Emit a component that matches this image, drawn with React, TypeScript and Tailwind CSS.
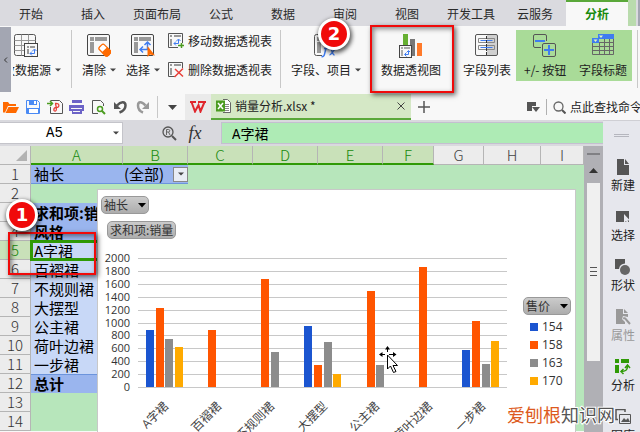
import type { ReactNode } from "react"

interface IconProps {
  width: number
  height: number
  className?: string
  children: ReactNode
}

function Icon({ width, height, className = "", children }: IconProps) {
  return (
    <svg
      width={width}
      height={height}
      viewBox={`0 0 ${width} ${height}`}
      fill="none"
      aria-hidden="true"
      className={`shrink-0 ${className}`}
    >
      {children}
    </svg>
  )
}

function Caret({ className = "" }: { className?: string }) {
  return (
    <Icon width={6} height={4} className={className}>
      <path d="M0 0.5h6L3 3.5z" fill="#444" />
    </Icon>
  )
}

const TABS = [
  "开始",
  "插入",
  "页面布局",
  "公式",
  "数据",
  "审阅",
  "视图",
  "开发工具",
  "云服务",
  "分析",
]

const ACTIVE_TAB = "分析"

function MenuTabs() {
  return (
    <nav className="flex h-[26px] shrink-0 bg-[#dadadf]">
      {TABS.map((tab) => (
        <button
          key={tab}
          type="button"
          className={`min-w-[62px] shrink-0 whitespace-nowrap px-[9px] ${
            tab === ACTIVE_TAB
              ? "border-t-2 border-[#5aa83a] bg-[#f8f8f8] font-bold text-[#178a0c]"
              : "pt-0.5 text-[#2b2b2b]"
          }`}
        >
          {tab}
        </button>
      ))}
      <div className="w-2 shrink-0 bg-[#b9dbad]" />
      <div className="ml-0.5 flex-1 bg-[#a3a6b2]" />
    </nav>
  )
}

/* Ribbon icons */

function SourceIcon() {
  return (
    <Icon width={24} height={24}>
      <path d="M.5 2.5a2 2 0 0 1 2-2h17a2 2 0 0 1 2 2V10M.5 2.5v17a2 2 0 0 0 2 2H10" stroke="#555" />
      <path d="M.5 6.5h21M.5 11.5h10M.5 16.5h10M7.500 .5v21M14.500 .5v9" stroke="#999" />
      <rect x="10.500" y="9.500" width="13" height="13" fill="#f8f8f8" stroke="#444" />
      <path d="M13 12h2v2h-2zM16 12h5v2h-5zM13 15h2v5h-2z" fill="#999" />
      <path d="M16 19.500h4.500v-4M18 17.500l-2 2 2 2M18.500 17l2-2 2 2" stroke="#3f7cf0" />
    </Icon>
  )
}

function PivotFrame() {
  return (
    <>
      <rect x=".5" y=".5" width="22" height="21" rx="1.500" stroke="#444" />
      <path d="M3 3h4v4H3zM8 3h12v4H8zM3 8h4v11H3z" fill="#999" />
    </>
  )
}

function ClearIcon() {
  return (
    <Icon width={24} height={24}>
      <PivotFrame />
      <g transform="rotate(45 17.500 16.500)">
        <rect x="11.500" y="12.500" width="12" height="7" rx="2" fill="#fff" stroke="#ff6a00" strokeWidth="1.300" />
        <path d="M17 12h4.500a2.500 2.500 0 0 1 2.500 2.500v3a2.500 2.500 0 0 1-2.500 2.500H17z" fill="#ff6a00" />
      </g>
    </Icon>
  )
}

function SelectIcon() {
  return (
    <Icon width={24} height={24}>
      <PivotFrame />
      <path d="M9.500 15.500h7v-7M12 12.500l-3 3 3 3M13.500 11l3-3 3 3" stroke="#3f7cf0" strokeWidth="1.500" />
      <path d="M16.500 12v11l2.500-2.500 5 1z" fill="#ff6a00" />
    </Icon>
  )
}

function MovePivotIcon() {
  return (
    <Icon width={17} height={16}>
      <path d="M10 14.500H.5v-14h14V10" stroke="#555" />
      <path d="M2 2h2v2H2zM6 2h7v2H6zM2 6h2v7H2z" fill="#999" />
      <path d="M6 10.500h4.500v-4M8 8.500l-2 2 2 2M8.500 8l2-2 2 2" stroke="#3f7cf0" />
      <path d="M10 12.500h6M13.500 10v5" stroke="#4b9c20" strokeWidth="1.500" />
    </Icon>
  )
}

function DeletePivotIcon() {
  return (
    <Icon width={17} height={16}>
      <path d="M7 14.500H.5v-14h14V6" stroke="#555" />
      <path d="M2 2h2v2H2zM6 2h7v2H6zM2 6h2v7H2z" fill="#999" />
      <path d="M7 7l8 7.500M15 6.500L6.500 15" stroke="#e8403a" strokeWidth="1.500" />
    </Icon>
  )
}

function FieldItemIcon() {
  return (
    <Icon width={24} height={24}>
      <path d="M8 21.500H2.500a2 2 0 0 1-2-2v-17a2 2 0 0 1 2-2h18a2 2 0 0 1 2 2V12" stroke="#555" />
      <path d="M3 3h4v4H3zM8 3h12v4H8zM3 8h4v11H3z" fill="#999" />
      <path d="M7.500 22.500c3.500 1 3-4 4.500-8s2-4.500 4-4M10 14.500h5" stroke="#3f7cf0" strokeWidth="1.500" />
      <path d="M16 15c2-1 2 6 4.500 6M21.500 15c-1.500 0-4 6-6 6" stroke="#3f7cf0" strokeWidth="1.300" />
    </Icon>
  )
}

function PivotChartIcon() {
  return (
    <Icon width={26} height={24}>
      <path d="M5 0h5v11H5z" fill="#66b032" />
      <path d="M12 5h5v17h-5z" fill="#777" />
      <path d="M19 9h5v13h-5z" fill="#ff7a2a" />
      <rect x="1.500" y="11.500" width="12" height="12" fill="#f8f8f8" stroke="#444" />
      <path d="M3 13h2v2H3zM6 13h6v2H6zM3 16h2v6H3z" fill="#aaa" />
      <path d="M7 20.500h3.500v-3.500M8.500 18.500l-2 2 2 2M9 18l1.500-1.500L12 18" stroke="#3f7cf0" />
    </Icon>
  )
}

function FieldListIcon() {
  return (
    <Icon width={24} height={24}>
      <path d="M12 1h9.500a1 1 0 0 1 1 1v18.500a1 1 0 0 1-1 1H12z" fill="#d0d0d0" />
      <rect x=".5" y=".5" width="22" height="21" rx="1.500" stroke="#555" />
      <path d="M3.500 4.500h16v4h-16zM3.500 11.500h16v4h-16z" stroke="#888" />
      <path d="M5.500 6.500h12M5.500 13.500h12" stroke="#3f7cf0" />
      <path d="M11.500 2v20" stroke="#333" strokeDasharray="3 1" />
    </Icon>
  )
}

function PlusMinusIcon() {
  return (
    <Icon width={24} height={24}>
      <path d="M8 13.500H2a1.500 1.500 0 0 1-1.500-1.500V2A1.500 1.500 0 0 1 2 .5h10A1.500 1.500 0 0 1 13.500 2v5" stroke="#555" />
      <rect x="9.500" y="9.500" width="13" height="13" rx="1.500" stroke="#555" />
      <path d="M2 7h10M11 16h10M16 11v10" stroke="#3f7cf0" strokeWidth="2" />
    </Icon>
  )
}

function FieldHeaderIcon() {
  return (
    <Icon width={24} height={24}>
      <path d="M1.500 5v15.500h21V5M8.500 8v12M13.500 5v15M18.500 5v15M1 8.500h21M1 12.500h21M1 16.500h21" stroke="#666" />
      <path d="M7 0h16v5H7zM1 4h7v5H1z" fill="#3f7cf0" />
      <path d="M8 1.500h4l-2 2.500zM2.500 5.500h4l-2 2.500z" fill="#e6f6c0" />
    </Icon>
  )
}

interface RibbonButtonProps {
  icon: ReactNode
  label: string
  menu?: boolean
  className?: string
}

function RibbonButton({ icon, label, menu = false, className = "" }: RibbonButtonProps) {
  return (
    <button type="button" className={`flex shrink-0 flex-col items-center gap-1 ${className}`}>
      {icon}
      <span className="flex items-center gap-1 whitespace-nowrap leading-4">
        {label}
        {menu && <Caret />}
      </span>
    </button>
  )
}

function RibbonDivider({ className = "" }: { className?: string }) {
  return <div className={`-mt-1 h-[58px] w-px shrink-0 bg-[#c8c8c8] ${className}`} />
}

function Ribbon() {
  return (
    <div className="flex h-[68px] shrink-0 items-start bg-[#f8f8f8] pt-2 text-[#222]">
      <button
        type="button"
        aria-label="向左滚动"
        className="-mt-[7px] flex h-[65px] w-[11px] shrink-0 items-center justify-center bg-[#a3a6b2]"
      >
        <Icon width={5} height={6}>
          <path d="M4 .5L1.500 3 4 5.500" stroke="#333" />
        </Icon>
      </button>
      <div className="ml-0.5 flex w-[48px] shrink-0 flex-col items-end gap-1 overflow-hidden">
        <div className="w-full pl-px">
          <SourceIcon />
        </div>
        <button type="button" className="flex items-center gap-1 whitespace-nowrap leading-4">
          改数据源
          <Caret />
        </button>
      </div>
      <RibbonDivider className="ml-[10px]" />
      <RibbonButton icon={<ClearIcon />} label="清除" menu className="ml-[10px]" />
      <RibbonButton icon={<SelectIcon />} label="选择" menu className="ml-[10px]" />
      <div className="-mt-px ml-2 flex shrink-0 flex-col gap-[13px]">
        <button type="button" className="flex items-center gap-[3px] leading-4">
          <MovePivotIcon />
          移动数据透视表
        </button>
        <button type="button" className="flex items-center gap-[3px] leading-4">
          <DeletePivotIcon />
          删除数据透视表
        </button>
      </div>
      <RibbonDivider className="ml-2" />
      <RibbonButton icon={<FieldItemIcon />} label="字段、项目" menu className="ml-[10px]" />
      <RibbonButton icon={<PivotChartIcon />} label="数据透视图" className="ml-5" />
      <RibbonButton icon={<FieldListIcon />} label="字段列表" className="ml-[22px]" />
      <div className="-mt-1 ml-[5px] grid h-[51px] w-[116px] shrink-0 grid-cols-2 bg-[#a9db98] pt-1">
        <RibbonButton icon={<PlusMinusIcon />} label="+/- 按钮" />
        <RibbonButton icon={<FieldHeaderIcon />} label="字段标题" />
      </div>
      <RibbonDivider className="ml-[5px]" />
    </div>
  )
}

function QuickButton({ label, children }: { label: string; children: ReactNode }) {
  return (
    <button type="button" aria-label={label} title={label} className="shrink-0">
      {children}
    </button>
  )
}

function QuickAccess() {
  return (
    <div className="flex h-[26px] shrink-0 items-center overflow-hidden bg-[#f8f8f8] text-[#222]">
      <div className="flex shrink-0 items-center gap-1.5 pl-[3px]">
        <QuickButton label="打开">
          <Icon width={16} height={16}>
            <path d="M0 3h5l1.500 2H13v2H5l-3 6.500H0z" fill="#ff6a00" />
            <path d="M5.500 8H16l-3 6H2.500z" fill="#ff6a00" />
          </Icon>
        </QuickButton>
        <QuickButton label="保存">
          <Icon width={16} height={16}>
            <path d="M1.500 1.500h11l2 2v11h-13z" stroke="#4a8af4" />
            <path d="M4 1h8v5H4zM1 9h14v5H1z" fill="#4a8af4" />
            <path d="M9 2h2v3H9zM4 10h9v4H4z" fill="#fff" />
          </Icon>
        </QuickButton>
        <QuickButton label="输出为PDF">
          <Icon width={16} height={16}>
            <path d="M3.500 1.500h9l3 3v10h-12V8" stroke="#555" />
            <path d="M0 4.500h5M3 2l2.500 2.500L3 7" stroke="#4b9c20" strokeWidth="1.500" />
            <path d="M8 4.500c5-1 5 4.500 1 4-3 0-2.500 4.500-.5 3.500C10.500 11 9 7 8.500 5" stroke="#e8403a" strokeWidth="1.300" />
          </Icon>
        </QuickButton>
        <QuickButton label="打印">
          <Icon width={16} height={16}>
            <path d="M3 1h10v3H3zM0 6h15v6H0zM3 9h10v6H3z" fill="#6c63c7" />
            <path d="M2 9h11v1H2zM4 12h7v1H4z" fill="#f8f8f8" />
          </Icon>
        </QuickButton>
        <QuickButton label="打印预览">
          <Icon width={16} height={16}>
            <path d="M7 14.500H1.500v-13h8l3 3V7" stroke="#555" />
            <circle cx="9" cy="10" r="2.500" stroke="#4b9c20" strokeWidth="1.500" />
            <path d="M11 12l3 3" stroke="#4b9c20" strokeWidth="2" />
          </Icon>
        </QuickButton>
        <QuickButton label="撤销">
          <Icon width={16} height={16}>
            <path d="M4 6.500c4-4.500 8.500-4 8.500 0 0 3-2 5.500-6 7" stroke="#555" strokeWidth="2.500" />
            <path d="M1 3v7h7z" fill="#555" />
          </Icon>
        </QuickButton>
        <QuickButton label="恢复">
          <Icon width={16} height={16}>
            <path d="M10.500 6.500c-4-4.500-7.500-4-7.500 0 0 3 1 5.500 5 7" stroke="#999" strokeWidth="2.500" />
            <path d="M14 3v7H7z" fill="#999" />
          </Icon>
        </QuickButton>
      </div>
      <div className="ml-1.5 h-[22px] w-px shrink-0 bg-[#c8c8c8]" />
      <button type="button" aria-label="自定义" className="ml-[10px] shrink-0">
        <Icon width={9} height={5}>
          <path d="M0 0h9L4.500 5z" fill="#444" />
        </Icon>
      </button>
      <div className="ml-2 flex h-full w-[26px] shrink-0 items-center justify-center bg-[#eaeaea]">
        <Icon width={16} height={12}>
          <path d="M0 1h6M1.500 1l3.500 9.500L8.500 4l2 6.500L14.500 1M8 1h8" stroke="#e0262c" strokeWidth="2" />
        </Icon>
      </div>
      <div className="flex h-full w-[200px] shrink-0 items-center border-b-2 border-[#5aa83a] bg-[#d5e8c6] pl-[5px] pr-[6px]">
        <Icon width={15} height={14}>
          <path d="M7 .5h4.500l3 3v10H7" fill="#fff" stroke="#666" />
          <path d="M9 5.500h4M9 7.500h4M9 9.500h4M9 11.500h4" stroke="#888" />
          <path d="M0 1.500h9v11H0z" fill="#4b9c20" />
          <path d="M2 4l5 6M7 4l-5 6" stroke="#fff" strokeWidth="1.500" />
        </Icon>
        <span className="ml-1 flex-1 whitespace-nowrap">销量分析.xlsx *</span>
        <button type="button" aria-label="关闭">
          <Icon width={8} height={8}>
            <path d="M.5 .5l7 7M7.500 .5l-7 7" stroke="#444" />
          </Icon>
        </button>
      </div>
      <button type="button" aria-label="新建标签" className="ml-[7px] shrink-0">
        <Icon width={12} height={12}>
          <path d="M6 0v12M0 6h12" stroke="#555" strokeWidth="1.500" />
        </Icon>
      </button>
      <div className="flex-1" />
      <Icon width={13} height={11}>
        <path d="M0 0h9v4H5v5H0z" fill="#555" />
        <path d="M5 5h8L9 10z" fill="#555" />
      </Icon>
      <div className="ml-[6px] h-4 w-px shrink-0 bg-[#b0b0b0]" />
      <button type="button" className="ml-[6px] flex w-[87px] shrink-0 items-center gap-1 overflow-hidden whitespace-nowrap">
        <Icon width={13} height={13}>
          <circle cx="5.500" cy="5.500" r="4.500" stroke="#666" strokeWidth="1.300" />
          <path d="M9 9l3.500 3.500" stroke="#555" strokeWidth="2" />
        </Icon>
        点此查找命令
      </button>
    </div>
  )
}

function FormulaBar() {
  return (
    <div className="flex h-[26px] shrink-0 items-center bg-[#d9d9de] font-['Liberation_Mono','Noto_Sans_CJK_SC',monospace] text-[14px] text-black">
      <div className="flex h-[22px] w-[123px] shrink-0 items-center border border-l-0 border-[#c4c4ca] bg-white pr-[3px]">
        <input
          aria-label="名称框"
          defaultValue="A5"
          className="h-full min-w-0 flex-1 pr-1 text-center outline-none"
        />
        <Caret />
      </div>
      <Icon width={15} height={15} className="ml-[39px]">
        <circle cx="6" cy="6" r="5" stroke="#555" strokeWidth="1.300" />
        <path d="M4.500 9V3.500h2a1.200 1.200 0 0 1 0 2.500h-2M6.500 6l1.500 3" stroke="#666" />
        <path d="M10 10l4 4" stroke="#555" strokeWidth="2" />
      </Icon>
      <button
        type="button"
        className="ml-[10px] w-4 shrink-0 font-['Liberation_Serif',serif] text-lg leading-5 italic text-[#333]"
      >
        fx
      </button>
      <input
        aria-label="编辑栏"
        defaultValue="A字裙"
        className="ml-[18px] h-[22px] min-w-0 flex-1 border border-r-0 border-[#c4bfd0] bg-[#aeebb5] pl-[10px] outline-none"
      />
    </div>
  )
}

const COLUMNS = [
  { name: "A", width: "w-[92px]", selected: true },
  { name: "B", width: "w-[65px]", selected: true },
  { name: "C", width: "w-[65px]", selected: true },
  { name: "D", width: "w-[65px]", selected: true },
  { name: "E", width: "w-[65px]", selected: true },
  { name: "F", width: "w-[51px]", selected: true },
  { name: "G", width: "w-[50px]", selected: false },
  { name: "H", width: "w-[57px]", selected: false },
  { name: "I", width: "", selected: false },
]

const HEADER_CELL = "bg-[#9ab5ee] font-bold"
const ITEM_CELL = "bg-[#c8d8f7]"

const ROWS = [
  { text: "袖长", style: "bg-[#9ab5ee] border-b border-[#6c94dc]" },
  { text: "", style: "" },
  { text: "求和项:销量", style: HEADER_CELL },
  { text: "风格", style: HEADER_CELL },
  { text: "A字裙", style: ITEM_CELL },
  { text: "百褶裙", style: ITEM_CELL },
  { text: "不规则裙", style: ITEM_CELL },
  { text: "大摆型", style: ITEM_CELL },
  { text: "公主裙", style: ITEM_CELL },
  { text: "荷叶边裙", style: ITEM_CELL },
  { text: "一步裙", style: ITEM_CELL },
  { text: "总计", style: "bg-[#9ab5ee] border-t border-[#6c94dc] font-bold" },
  { text: "", style: "" },
  { text: "", style: "" },
]

const SELECTED_ROW = 5

function Sheet() {
  return (
    <table className="w-full table-fixed border-separate border-spacing-0 bg-[#b7e6bb] text-[15px] text-black">
      <thead>
        <tr className="h-[19px] text-[15px] leading-4 text-[#444]">
          <th className="w-[31px] border-r border-b border-[#b5b5b5] bg-[#ececec] p-0">
            <Icon width={11} height={11} className="mr-[3px] ml-auto">
              <path d="M11 0v11H0z" fill="#b2b2b2" />
            </Icon>
          </th>
          {COLUMNS.map((col) => (
            <th
              key={col.name}
              className={`h-[19px] border-r border-r-[#b5b5b5] p-0 font-light ${col.width} ${
                col.selected
                  ? "border-b-2 border-b-[#2f9a06] bg-[#c9e1b9] text-[#178a0c]"
                  : "border-b border-b-[#b5b5b5] bg-[#ececec]"
              }`}
            >
              {col.name}
            </th>
          ))}
        </tr>
      </thead>
      <tbody>
        {ROWS.map((row, i) => {
          const num = i + 1
          const selected = num === SELECTED_ROW
          return (
            <tr key={num} className="leading-[18px]">
              <th
                className={`h-[19px] border-r border-b border-[#b5b5b5] p-0 text-[15px] leading-4 font-light ${
                  selected ? "bg-[#c9e1b9] text-[#178a0c]" : "bg-[#ececec] text-[#333]"
                }`}
              >
                {num}
              </th>
              <td
                className={`overflow-hidden p-0 whitespace-nowrap ${row.style} ${
                  selected ? "outline-[3px] -outline-offset-2 outline-[#2f9a06]" : ""
                }`}
              >
                <div className="pl-[3px]">{row.text}</div>
              </td>
              {num === 1 ? (
                <>
                  <td className="border-b border-[#6c94dc] bg-[#9ab5ee] p-0">
                    <div className="flex items-center justify-between pl-px">
                      (全部)
                      <button
                        type="button"
                        aria-label="筛选袖长"
                        className="flex h-[15px] w-[15px] items-center justify-center border border-[#888] bg-[#e9edf5]"
                      >
                        <Caret />
                      </button>
                    </div>
                  </td>
                  <td colSpan={7} />
                </>
              ) : (
                <td colSpan={8} />
              )}
            </tr>
          )
        })}
      </tbody>
    </table>
  )
}

const SERIES = [
  { name: "154", color: "#1b55d0" },
  { name: "158", color: "#ff5500" },
  { name: "163", color: "#8c8c8c" },
  { name: "170", color: "#ffaa00" },
]

const SALES = [
  { label: "A字裙", values: [890, 1225, 750, 620] },
  { label: "百褶裙", values: [0, 890, 0, 0] },
  { label: "不规则裙", values: [0, 1680, 545, 0] },
  { label: "大摆型", values: [950, 345, 700, 205] },
  { label: "公主裙", values: [0, 1490, 345, 0] },
  { label: "荷叶边裙", values: [0, 1860, 0, 0] },
  { label: "一步裙", values: [575, 1030, 360, 715] },
]

const PLOT = { left: 40, top: 19, width: 369, height: 129 }
const MAX_VALUE = 2000
const TICKS = Array.from({ length: 11 }, (_, i) => MAX_VALUE - i * 200)

function BarChart() {
  const step = PLOT.width / SALES.length
  const bottom = PLOT.top + PLOT.height
  const yOf = (value: number) => Math.round(bottom - (value / MAX_VALUE) * PLOT.height)

  return (
    <svg
      width={425}
      height={200}
      viewBox="0 0 425 200"
      role="img"
      aria-label="销量柱形图"
      className="shrink-0 font-['Open_Sans','Noto_Sans_CJK_SC',sans-serif] text-[11px]"
    >
      {TICKS.map((tick) => (
        <g key={tick}>
          <rect x={PLOT.left} y={yOf(tick)} width={PLOT.width} height={1} fill="#c8c8c8" />
          <text x={32} y={yOf(tick) + 4} textAnchor="end" fill="#333">
            {tick}
          </text>
        </g>
      ))}
      {SALES.map((item, i) => {
        const start = PLOT.left + i * step
        const labelX = Math.round(start + step / 2) + 5
        return (
          <g key={item.label}>
            {item.values.map((value, j) =>
              value > 0 ? (
                <rect
                  key={SERIES[j].name}
                  x={Math.round(start + 8 + j * 9.7)}
                  y={yOf(value)}
                  width={8}
                  height={bottom - yOf(value)}
                  fill={SERIES[j].color}
                />
              ) : null,
            )}
            <text
              x={labelX}
              y={bottom + 20}
              textAnchor="end"
              transform={`rotate(-45 ${labelX} ${bottom + 20})`}
              fill="#444"
              className="text-xs"
            >
              {item.label}
            </text>
          </g>
        )
      })}
    </svg>
  )
}

interface FieldButtonProps {
  label: string
  menu?: boolean
  className?: string
}

function FieldButton({ label, menu = false, className = "" }: FieldButtonProps) {
  return (
    <button
      type="button"
      className={`flex h-[18px] items-center gap-2.5 rounded-[5px] border border-[#999] bg-linear-to-b from-[#cbcbcb] to-[#adadad] px-0.5 leading-4 whitespace-nowrap text-[#333] ${className}`}
    >
      {label}
      {menu && (
        <Icon width={8} height={5}>
          <path d="M0 0h8L4 4.500z" fill="#000" />
        </Icon>
      )}
    </button>
  )
}

function ChartPanel() {
  return (
    <div className="absolute top-[43px] right-2 bottom-0 left-[97px] flex flex-col overflow-hidden border border-b-0 border-[#c8c8c8] bg-white pt-[6px]">
      <div className="flex shrink-0 flex-col items-start gap-[7px] pl-[3px]">
        <FieldButton label="袖长" menu className="text-xs" />
        <FieldButton label="求和项:销量" className="ml-[6px] text-xs" />
      </div>
      <div className="flex items-start">
        <BarChart />
        <div className="flex shrink-0 flex-col pt-[58px]">
          <FieldButton label="售价" menu className="text-xs" />
          <ul className="pt-[3px] pl-[7px] font-['Open_Sans',sans-serif] text-xs text-[#333]">
            {SERIES.map((series) => (
              <li key={series.name} className="flex h-[18px] items-center gap-1">
                <span className="h-2 w-2" style={{ backgroundColor: series.color }} />
                {series.name}
              </li>
            ))}
          </ul>
        </div>
      </div>
    </div>
  )
}

function ScrollBar() {
  return (
    <div className="flex w-[19px] shrink-0 flex-col items-center bg-[#b0b0b5]">
      <div className="mt-[7px] h-0.5 w-[13px] shrink-0 bg-[#808084]" />
      <button type="button" aria-label="向上滚动" className="mt-[13px] shrink-0">
        <Icon width={9} height={5}>
          <path d="M0 5l4.500-5L9 5z" fill="#333" />
        </Icon>
      </button>
      <div className="mt-[10px] flex h-[178px] w-[13px] shrink-0 items-center justify-center bg-[#f0f0f0]">
        <Icon width={7} height={10}>
          <path d="M0 .5h7M0 4.500h7M0 8.500h7" stroke="#555" />
        </Icon>
      </div>
    </div>
  )
}

const SIDE_TOOLS = [
  {
    label: "新建",
    icon: (
      <>
        <path d="M2 0h7v6h5v10H2z" fill="#555" />
        <path d="M10 0l4 5h-4z" fill="#555" />
      </>
    ),
  },
  {
    label: "选择",
    icon: (
      <>
        <path d="M1 2h13v11H1z" fill="#555" />
        <path d="M9 5v9l2-2 1.500 3 1.500-1-1.500-2.500H15z" fill="#e6e7ed" />
      </>
    ),
  },
  {
    label: "形状",
    icon: (
      <>
        <path d="M0 0h10v4.500A6 6 0 0 0 4 10H0z" fill="#555" />
        <circle cx="10" cy="11" r="5" fill="#666" />
      </>
    ),
  },
  {
    label: "属性",
    muted: true,
    icon: (
      <>
        <path d="M1 0h7v5h5v3L8 7l-1 3 3 3v2H1z" fill="#999" />
        <path d="M9 0l4 4H9z" fill="#999" />
        <path d="M8 9.500a2 2 0 0 1 3 1l4 4.500" stroke="#999" strokeWidth="2" />
      </>
    ),
  },
  {
    label: "分析",
    icon: (
      <>
        <path d="M0 0h4v4H0zM6 0h8v4H6zM0 6h4v8H0z" fill="#2f9a06" />
        <path d="M6 12.500c5 0 6.500-1.500 6.500-5.500M8.500 10L6 12.500 8.500 15M10 9l2.500-3L15 9" stroke="#2f9a06" strokeWidth="1.500" />
      </>
    ),
  },
  {
    label: "图库",
    icon: (
      <>
        <path d="M3 10.500H1v-10h9V3" stroke="#555" strokeWidth="1.500" />
        <path d="M4.500 5.500h11v9h-11z" stroke="#555" />
        <path d="M6 13l3-4 2 2 2-2 2 4z" fill="#555" />
      </>
    ),
  },
]

function SideBar() {
  return (
    <aside className="flex w-[37px] shrink-0 flex-col overflow-hidden border-t border-[#cfcfd4] bg-[#e6e7ed] pl-2">
      <div className="mt-[13px] ml-[3px] h-[3px] w-[15px] shrink-0 border-y border-[#b5b6be]" />
      {SIDE_TOOLS.map((tool, i) => (
        <button
          key={tool.label}
          type="button"
          className={`flex h-[50px] w-6 shrink-0 flex-col items-center gap-0.5 whitespace-nowrap ${
            i === 0 ? "mt-[22px]" : ""
          } ${tool.muted ? "text-[#999]" : "text-[#222]"}`}
        >
          <Icon width={16} height={16}>
            {tool.icon}
          </Icon>
          <span className="leading-4">{tool.label}</span>
        </button>
      ))}
    </aside>
  )
}

function StepBadge({ step, className }: { step: number; className: string }) {
  return (
    <div
      className={`absolute flex h-8 w-8 items-center justify-center rounded-full border-[3px] border-white bg-[#f00a0a] font-['DejaVu_Sans',sans-serif] text-lg font-bold text-white shadow-[1px_2px_4px_1px_rgba(0,0,0,0.65)] ${className}`}
    >
      {step}
    </div>
  )
}

function Highlight({ className }: { className: string }) {
  return (
    <div
      className={`pointer-events-none absolute border-2 border-[#f00a0a] shadow-[2px_2px_5px_rgba(0,0,0,0.6),inset_2px_2px_5px_rgba(0,0,0,0.45)] ${className}`}
    />
  )
}

function MoveCursor() {
  return (
    <Icon width={20} height={28} className="pointer-events-none absolute top-[346px] left-[379px]">
      <path d="M8.500 1v14M1 8.500h16" stroke="#000" strokeDasharray="5 4" />
      <path d="M6 3.500L8.500 0 11 3.500zM3.500 6L0 8.500 3.500 11zM14 6l3.500 2.500L14 11z" fill="#000" />
      <path d="M8.500 9v14l3-3 3 6.500 2.500-1-3-6h4.500z" fill="#fff" stroke="#000" />
    </Icon>
  )
}

export default function App() {
  return (
    <div className="relative flex h-screen flex-col overflow-hidden bg-[#f8f8f8] font-['Noto_Sans_CJK_SC',sans-serif] text-xs">
      <MenuTabs />
      <Ribbon />
      <QuickAccess />
      <div className="flex min-h-0 flex-1">
        <main className="flex min-w-0 flex-1 flex-col">
          <FormulaBar />
          <div className="flex min-h-0 flex-1">
            <div className="relative min-w-0 flex-1 overflow-hidden">
              <Sheet />
              <ChartPanel />
            </div>
            <ScrollBar />
          </div>
        </main>
        <SideBar />
      </div>

      <Highlight className="top-[25px] left-[370px] h-[68px] w-[84px]" />
      <Highlight className="top-[232px] left-[8px] h-[43px] w-[88px]" />
      <StepBadge step={2} className="top-[18px] left-[318px]" />
      <StepBadge step={1} className="top-[199px] left-[6px]" />
      <MoveCursor />
      <p className="absolute right-[25px] bottom-[6px] text-lg leading-6 text-[#555] [paint-order:stroke] [-webkit-text-stroke:2px_white]">
        <span className="text-[#dd5a20]">爱刨根</span>
        知识网
      </p>
    </div>
  )
}
